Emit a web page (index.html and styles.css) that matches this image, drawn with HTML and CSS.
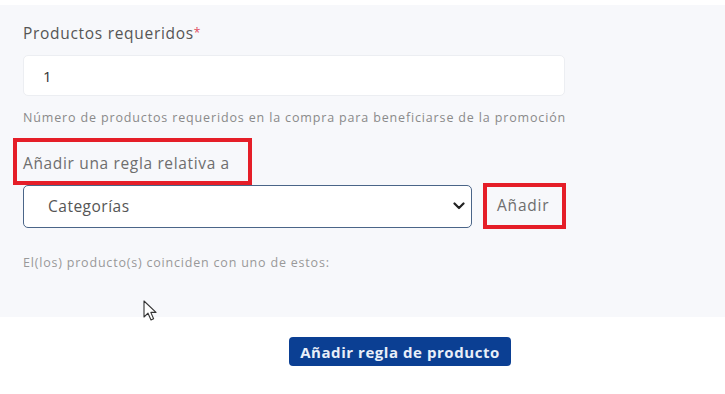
FILE: index.html
```html
<!DOCTYPE html>
<html lang="es">
<head>
<meta charset="utf-8">
<title>Regla de producto</title>
<link rel="stylesheet" href="styles.css">
</head>
<body>
<div class="page">
  <section class="panel">
    <div class="field">
      <label class="label">Productos requeridos<span class="req">*</span></label>
      <div class="input">1</div>
      <p class="help">Número de productos requeridos en la compra para beneficiarse de la promoción</p>
    </div>
    <div class="rule">
      <label class="rule-label">Añadir una regla relativa a</label>
      <div class="rule-row">
        <div class="select">
          <span>Categorías</span>
          <svg class="chev" width="12" height="8" viewBox="0 0 12 8"><path d="M1.5 1.5 L6 6 L10.5 1.5" fill="none" stroke="#222" stroke-width="2.2" stroke-linecap="round" stroke-linejoin="round"/></svg>
        </div>
        <button class="add">Añadir</button>
      </div>
      <p class="match">El(los) producto(s) coinciden con uno de estos:</p>
    </div>
  </section>
  <div class="actions">
    <button class="primary">Añadir regla de producto</button>
  </div>
  <svg class="cursor" width="16" height="24" viewBox="0 0 16 24"><path d="M1 1 L1 17 L5 13.2 L8 20 L10.6 18.8 L7.8 12.4 L13 12.4 Z" fill="#fff" stroke="#333" stroke-width="1.1" stroke-linejoin="round"/></svg>
</div>
</body>
</html>
```
FILE: styles.css
```css
* { box-sizing: border-box; }
body {
  margin: 0;
  background: #ffffff;
  font-family: "Open Sans", "Noto Sans", sans-serif;
  color: #555;
}
.page {
  position: relative;
  padding-top: 5px;
  width: 725px;
  height: 394px;
}
.panel {
  background: #f7f8fb;
  height: 312px;
  padding: 18px 0 0 23px;
}
.label {
  display: block;
  font-size: 15.5px;
  line-height: 20px;
  color: #555;
  letter-spacing: 0.7px;
}
.req { color: #e04a5e; font-size: 12px; vertical-align: top; margin-left: 0; }
.input {
  margin-top: 12px;
  width: 542px;
  height: 41px;
  background: #fff;
  border: 1px solid #eceef2;
  border-radius: 5px;
  padding: 0 0 0 19px;
  display: flex;
  align-items: center;
  font-size: 15px;
  color: #333;
}
.help {
  margin: 14px 0 0;
  font-size: 12.5px;
  line-height: 16px;
  color: #8a8a8a;
  white-space: nowrap;
  letter-spacing: 0.85px;
}
.rule { margin-top: 12px; }
.rule-label {
  display: inline-block;
  margin-left: -10px;
  border: 4px solid #e51e28;
  padding: 11px 18px 0 6px;
  height: 47px;
  font-size: 15.5px;
  line-height: 20px;
  color: #6e6e6e;
  letter-spacing: 0.65px;
}
.rule-row {
  display: flex;
  align-items: center;
  gap: 11px;
  margin-top: -2px;
}
.select {
  width: 449px;
  height: 43px;
  background: #fff;
  border: 1px solid #4a6588;
  border-radius: 5px;
  display: flex;
  align-items: center;
  justify-content: space-between;
  padding: 0 6px 0 24px;
  font-size: 15.5px;
  color: #555;
  letter-spacing: 0.5px;
}
.chev { display: block; }
.add {
  width: 83px;
  height: 46px;
  background: transparent;
  border: 4px solid #e51e28;
  font-family: inherit;
  font-size: 15.5px;
  color: #6e6e6e;
  padding: 0 0 2px 10px;
  text-align: left;
  letter-spacing: 0.8px;
}
.match {
  margin: 26px 0 0;
  font-size: 12.5px;
  line-height: 16px;
  color: #999;
  letter-spacing: 0.8px;
}
.actions {
  display: flex;
  padding: 20px 0 0 289px;
}
.primary {
  width: 222px;
  height: 29px;
  background: #0b3f93;
  border: none;
  border-radius: 4px;
  color: #e9eff9;
  font-family: inherit;
  font-weight: 700;
  font-size: 15px;
  padding: 0;
  letter-spacing: 0.55px;
}
.cursor {
  position: absolute;
  left: 143px;
  top: 300px;
}
```
